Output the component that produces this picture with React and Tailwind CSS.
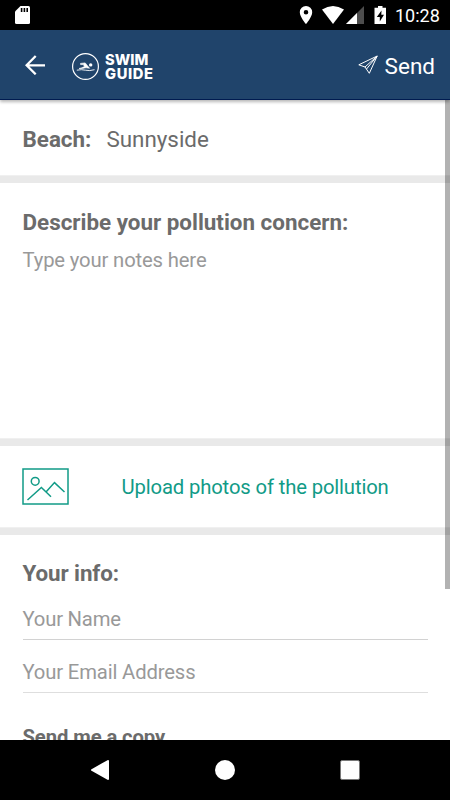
function StatusBar() {
  return (
    <div className="flex h-[30px] shrink-0 bg-black pl-[15px] text-white">
      <svg width="380" height="30" viewBox="15 0 380 30" fill="white">
        <path d="M20.5 6H28.5Q30 6 30 7.5V22.5Q30 24 28.5 24H16.5Q15 24 15 22.5V11.5Z" />
        <path d="M20.8 8h1.6v4h-1.6zM23.6 8h1.6v4h-1.6zM26.4 8h1.6v4h-1.6z" fill="black" />
        <path fillRule="evenodd" d="M306 6a6.2 6.2 0 0 0-6.2 6.2C299.800 17 306 24 306 24s6.200-7 6.200-11.800A6.200 6.200 0 0 0 306 6zm0 4a2.300 2.300 0 1 1 0 4.600a2.300 2.300 0 0 1 0-4.600z" />
        <path d="M322 9.600Q333 2.500 344 9.600L333 24Z" />
        <path d="M364 6V24H346Z" fill="#4d4d4d" />
        <path d="M357 13V24H346Z" />
        <path d="M378 6h4.500v1.700H386V24H374.500V7.700H378z" />
        <path d="M381.500 10.500L376.800 17H379.800V21.500L384 14.800H381.300Z" fill="black" />
      </svg>
      <span className="mt-[4px] text-[18px] leading-6">10:28</span>
    </div>
  );
}

function Header() {
  return (
    <header className="relative z-10 flex h-[70px] shrink-0 items-start border-b border-[#001b50] bg-[#20446b] text-white shadow-[0_2px_3px_rgba(0,0,0,0.28)]">
      <svg className="ml-[25px] mt-[25px]" width="20" height="20" viewBox="0 0 20 20" fill="none" stroke="white" strokeWidth="2.300">
        <path d="M20 10.300H2M10.700 1L1.600 10.300L10.700 19.300" />
      </svg>
      <svg className="ml-[27px] mt-[22px]" width="28" height="29" viewBox="0 0 28 29" fill="none" stroke="white">
        <circle cx="13.500" cy="14.500" r="12.900" strokeWidth="1.200" />
        <circle cx="18.700" cy="12.900" r="1.700" fill="white" stroke="none" />
        <path d="M8.500 11.400L13.200 10.900L17.600 16.300Q14 15.200 10.500 16.500L7 16.500Q10 16 12.500 14.500L11.300 12.600L8.600 12.600Z" fill="white" strokeWidth=".6" />
        <path d="M4.800 18.200Q9.500 17.200 13.500 18.200T22.500 17.700" strokeWidth=".9" />
      </svg>
      <div className="ml-[5px] mt-[23px] font-[Inter,sans-serif] text-[14.700px] leading-[14px] font-extrabold">
        <div className="h-[14px] tracking-[0.020px]">SWIM</div>
        <div className="h-[14px] tracking-[0.600px]">GUIDE</div>
      </div>
      <div className="mt-[23px] mr-[15px] ml-auto flex">
        <svg className="mt-[2px] mr-[7px]" width="20" height="20" viewBox="0 0 20 20" fill="none" stroke="white" strokeWidth="1" strokeLinejoin="round">
          <path d="M19.200 1L.8 9.800L7 12L11.300 18.300ZM19.200 1L7 12M19.200 1L8.500 14" />
        </svg>
        <span className="text-[22.500px] leading-[26px]">Send</span>
      </div>
    </header>
  );
}

function Divider() {
  return <div className="h-2 shrink-0 border-t border-[#f0f0f0] bg-[#e9e9e9]" />;
}

export default function App() {
  return (
    <div className="flex h-[800px] w-[450px] flex-col overflow-hidden bg-white font-[Roboto,sans-serif] text-[#6b6b6b]">
      <StatusBar />
      <Header />
      <main className="relative flex h-[640px] flex-col overflow-hidden">
        <section className="flex h-[75px] shrink-0 px-[22.500px] pt-[27px] text-[22.400px] leading-6">
          <span className="font-bold">Beach:</span>
          <span className="ml-[15px]">Sunnyside</span>
        </section>
        <Divider />
        <section className="h-[255px] shrink-0 px-[22.500px] pt-[27px]">
          <h2 className="text-[22.400px] leading-6 font-bold">Describe your pollution concern:</h2>
          <p className="mt-[14px] text-[20.250px] leading-6 tracking-[-0.150px] text-[#999]">Type your notes here</p>
        </section>
        <Divider />
        <section className="flex h-[81px] shrink-0 px-[22px] pt-[22px] text-[#119b87]">
          <svg width="47" height="37" viewBox="0 0 47 37" fill="none" stroke="currentColor" strokeWidth="1.500">
            <rect x="1" y="1" width="45" height="35" />
            <circle cx="13.200" cy="13.300" r="3.900" />
            <path d="M5.500 32L19.400 19.500L29 28.700M24 24L32.500 14.600L42.500 24" />
          </svg>
          <span className="mt-[7px] ml-[52.500px] text-[20.250px] leading-6 tracking-[-0.140px]">Upload photos of the pollution</span>
        </section>
        <Divider />
        <section className="shrink-0 px-[22.500px] pt-[26px]">
          <h2 className="text-[22.400px] leading-6 font-bold tracking-[-0.100px]">Your info:</h2>
          <div className="mt-[22px] h-[33px] border-b border-[#d2d2d2] text-[20.250px] leading-6 tracking-[-0.200px] text-[#999]">Your Name</div>
          <div className="mt-[20px] h-[33px] border-b border-[#dedede] text-[20.250px] leading-6 tracking-[-0.150px] text-[#999]">Your Email Address</div>
          <h2 className="mt-[32px] text-[20.250px] leading-6 font-bold tracking-[-0.100px]">Send me a copy</h2>
        </section>
        <div className="absolute top-0 right-0 h-[489px] w-[5px] bg-black/30" />
      </main>
      <nav className="flex h-[60px] shrink-0 items-center bg-black">
        <svg className="ml-[90px]" width="20" height="20" viewBox="0 0 20 20" fill="white" stroke="white" strokeWidth="2" strokeLinejoin="round">
          <path d="M2 10L18 1V19Z" />
        </svg>
        <div className="ml-[105px] h-5 w-5 rounded-full bg-white" />
        <div className="ml-[105px] h-5 w-5 rounded-[2px] border border-[#777] bg-white" />
      </nav>
    </div>
  );
}
